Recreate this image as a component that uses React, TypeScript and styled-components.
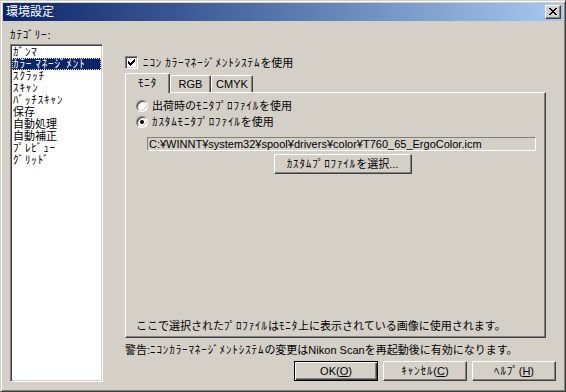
import React from "react";
import styled, { createGlobalStyle, css } from "styled-components";

const GlobalStyle = createGlobalStyle`
  html, body {
    margin: 0;
    padding: 0;
    background: #d4d0c8;
  }
  body {
    font-family: "Liberation Sans", "Noto Sans CJK JP", sans-serif;
    font-size: 11px;
    color: #000;
  }
`;

const Window = styled.div`
  width: 566px;
  height: 392px;
  box-sizing: border-box;
  background: #d4d0c8;
  border: 1px solid;
  border-color: #d4d0c8 #404040 #404040 #d4d0c8;
  box-shadow: inset 1px 1px #fff, inset -1px -1px #808080;
  padding: 2px;
  display: flex;
  flex-direction: column;
`;

const TitleBar = styled.div`
  height: 18px;
  display: flex;
  align-items: center;
  justify-content: space-between;
  padding: 0 2px 0 2px;
  background: linear-gradient(to right, #0a246a, #a6caf0);
`;

const TitleText = styled.span`
  color: #fff;
  font-size: 12px;
  line-height: 12px;
  padding-left: 1px;
`;

const CloseButton = styled.div`
  width: 16px;
  height: 14px;
  box-sizing: border-box;
  background: #d4d0c8;
  border: 1px solid;
  border-color: #fff #404040 #404040 #fff;
  box-shadow: inset -1px -1px #808080;
  display: flex;
  padding: 2px 0 0 3px;
`;

const Body = styled.div`
  flex: 1;
  display: flex;
  padding: 8px 0 0 7px;
`;

const LeftColumn = styled.div`
  width: 93px;
  display: flex;
  flex-direction: column;
`;

const Label = styled.div`
  line-height: 12px;
  height: 12px;
  margin-bottom: 3px;
`;

const ListBox = styled.div`
  height: 338px;
  box-sizing: border-box;
  background: #fff;
  border: 1px solid;
  border-color: #808080 #fff #fff #808080;
  box-shadow: inset 1px 1px #404040, inset -1px -1px #d4d0c8;
  padding: 1px;
`;

const ListItem = styled.div<{ $selected?: boolean }>`
  height: 12px;
  line-height: 12px;
  padding-left: 1px;
  white-space: nowrap;
  ${(p) =>
    p.$selected &&
    css`
      background: #0a246a;
      color: #fff;
      outline: 1px dotted #f5db95;
      outline-offset: -1px;
    `}
`;

const RightColumn = styled.div`
  width: 431px;
  margin-left: 22px;
  display: flex;
  flex-direction: column;
`;

const CheckRow = styled.label`
  margin-top: 27px;
  height: 13px;
  display: flex;
  align-items: center;
  gap: 5px;
  line-height: 12px;
`;

const CheckBox = styled.span`
  width: 13px;
  height: 13px;
  box-sizing: border-box;
  background: #fff;
  border: 1px solid;
  border-color: #808080 #fff #fff #808080;
  box-shadow: inset 1px 1px #404040, inset -1px -1px #d4d0c8;
  padding: 2px 0 0 2px;
  display: flex;
`;

const TabStrip = styled.div`
  margin-top: 4px;
  height: 19px;
  display: flex;
  align-items: flex-end;
`;

const Tab = styled.div<{ $active?: boolean; $w: number }>`
  width: ${(p) => p.$w}px;
  box-sizing: border-box;
  height: ${(p) => (p.$active ? 20 : 17)}px;
  background: #d4d0c8;
  border: 1px solid;
  border-bottom: none;
  border-color: #fff #404040 transparent #fff;
  box-shadow: inset -1px 0 #808080;
  border-radius: 2px 2px 0 0;
  display: flex;
  justify-content: center;
  padding-top: ${(p) => (p.$active ? 3 : 2)}px;
  line-height: 12px;
  position: relative;
  z-index: ${(p) => (p.$active ? 1 : 0)};
  margin-bottom: ${(p) => (p.$active ? -1 : 0)}px;
`;

const Panel = styled.div`
  width: 421px;
  height: 246px;
  box-sizing: border-box;
  border: 1px solid;
  border-color: #fff #404040 #404040 #fff;
  box-shadow: inset -1px -1px #808080;
  padding: 5px 10px 5px 10px;
  display: flex;
  flex-direction: column;
`;

const RadioRow = styled.div`
  height: 16px;
  display: flex;
  align-items: center;
  gap: 4px;
  line-height: 12px;
`;

const RadioCircle = styled.span<{ $checked?: boolean }>`
  width: 12px;
  height: 12px;
  box-sizing: border-box;
  border-radius: 50%;
  background: #fff;
  border: 1px solid;
  border-color: #808080 #fff #fff #808080;
  box-shadow: inset 1px 1px #404040, inset -1px -1px #d4d0c8;
  display: flex;
  align-items: center;
  justify-content: center;
  &::after {
    content: "";
    width: 4px;
    height: 4px;
    border-radius: 50%;
    background: #000;
    display: ${(p) => (p.$checked ? "block" : "none")};
  }
`;

const PathField = styled.div`
  margin: 7px 0 0 11px;
  width: 389px;
  height: 14px;
  box-sizing: border-box;
  border: 1px solid;
  border-color: #808080 #fff #fff #808080;
  padding-left: 1px;
  line-height: 12px;
  white-space: nowrap;
`;

const CenterRow = styled.div`
  margin: 3px 0 0 11px;
  width: 389px;
  display: flex;
  justify-content: center;
  padding-left: 2px;
  box-sizing: border-box;
`;

const Button = styled.button<{ $default?: boolean; $w: number }>`
  width: ${(p) => p.$w}px;
  height: 20px;
  box-sizing: border-box;
  background: #d4d0c8;
  font: inherit;
  color: #000;
  padding: 0;
  line-height: 12px;
  border: 1px solid;
  border-color: #fff #404040 #404040 #fff;
  box-shadow: inset -1px -1px #808080;
  ${(p) =>
    p.$default &&
    css`
      border-color: #000;
      box-shadow: inset 1px 1px #fff, inset -1px -1px #404040,
        inset -2px -2px #808080;
    `}
`;

const Note = styled.div`
  margin-top: auto;
  line-height: 12px;
`;

const Warning = styled.div`
  margin-top: 6px;
  line-height: 12px;
  white-space: nowrap;
`;

const ButtonRow = styled.div`
  margin-top: 5px;
  display: flex;
  justify-content: flex-end;
  gap: 5px;
`;

// half-width katakana are a little wider in the original UI font
const Kana = styled.span`
  letter-spacing: 0.9px;
`;

const jp = (s: string) =>
  s.split(/([\uFF61-\uFF9F]+)/).map((part, i) =>
    /[\uFF61-\uFF9F]/.test(part) ? <Kana key={i}>{part}</Kana> : part
  );

const CheckMark = () => (
  <svg width="7" height="7" viewBox="0 0 7 7" shapeRendering="crispEdges">
    <path
      d="M6 0h1v1h-1z M5 1h2v1h-2z M0 2h1v1h-1z M4 2h3v1h-3z M0 3h2v1h-2z M3 3h3v1h-3z M0 4h5v1h-5z M1 5h3v1h-3z M2 6h1v1h-1z"
      fill="#000"
    />
  </svg>
);

const CloseGlyph = () => (
  <svg width="8" height="7" viewBox="0 0 8 7" shapeRendering="crispEdges">
    <path
      d="M0 0h2v1h-2z M6 0h2v1h-2z M1 1h2v1h-2z M5 1h2v1h-2z M2 2h4v1h-4z M3 3h2v1h-2z M2 4h4v1h-4z M1 5h2v1h-2z M5 5h2v1h-2z M0 6h2v1h-2z M6 6h2v1h-2z"
      fill="#000"
    />
  </svg>
);

const categories = [
  "ｶﾞﾝﾏ",
  "ｶﾗｰ ﾏﾈｰｼﾞﾒﾝﾄ",
  "ｽｸﾗｯﾁ",
  "ｽｷｬﾝ",
  "ﾊﾞｯﾁｽｷｬﾝ",
  "保存",
  "自動処理",
  "自動補正",
  "ﾌﾟﾚﾋﾞｭｰ",
  "ｸﾞﾘｯﾄﾞ",
];

export default function App() {
  return (
    <>
      <GlobalStyle />
      <Window>
        <TitleBar>
          <TitleText>環境設定</TitleText>
          <CloseButton>
            <CloseGlyph />
          </CloseButton>
        </TitleBar>
        <Body>
          <LeftColumn>
            <Label>{jp("ｶﾃｺﾞﾘｰ:")}</Label>
            <ListBox>
              {categories.map((c, i) => (
                <ListItem key={c} $selected={i === 1}>
                  {jp(c)}
                </ListItem>
              ))}
            </ListBox>
          </LeftColumn>
          <RightColumn>
            <CheckRow>
              <CheckBox>
                <CheckMark />
              </CheckBox>
              <span>{jp("ﾆｺﾝ ｶﾗｰﾏﾈｰｼﾞﾒﾝﾄｼｽﾃﾑを使用")}</span>
            </CheckRow>
            <TabStrip>
              <Tab $active $w={45}>{jp("ﾓﾆﾀ")}</Tab>
              <Tab $w={41}>RGB</Tab>
              <Tab $w={42}>CMYK</Tab>
            </TabStrip>
            <Panel>
              <RadioRow>
                <RadioCircle />
                <span>{jp("出荷時のﾓﾆﾀﾌﾟﾛﾌｧｲﾙを使用")}</span>
              </RadioRow>
              <RadioRow>
                <RadioCircle $checked />
                <span>{jp("ｶｽﾀﾑﾓﾆﾀﾌﾟﾛﾌｧｲﾙを使用")}</span>
              </RadioRow>
              <PathField>C:¥WINNT¥system32¥spool¥drivers¥color¥T760_65_ErgoColor.icm</PathField>
              <CenterRow>
                <Button $w={138}>{jp("ｶｽﾀﾑﾌﾟﾛﾌｧｲﾙを選択...")}</Button>
              </CenterRow>
              <Note>{jp("ここで選択されたﾌﾟﾛﾌｧｲﾙはﾓﾆﾀ上に表示されている画像に使用されます。")}</Note>
            </Panel>
            <Warning>{jp("警告:ﾆｺﾝｶﾗｰﾏﾈｰｼﾞﾒﾝﾄｼｽﾃﾑの変更はNikon Scanを再起動後に有効になります。")}</Warning>
            <ButtonRow>
              <Button $default $w={84}>
                OK(<u>O</u>)
              </Button>
              <Button $w={84}>
                {jp("ｷｬﾝｾﾙ")}(<u>C</u>)
              </Button>
              <Button $w={84}>
                {jp("ﾍﾙﾌﾟ")}(<u>H</u>)
              </Button>
            </ButtonRow>
          </RightColumn>
        </Body>
      </Window>
    </>
  );
}
